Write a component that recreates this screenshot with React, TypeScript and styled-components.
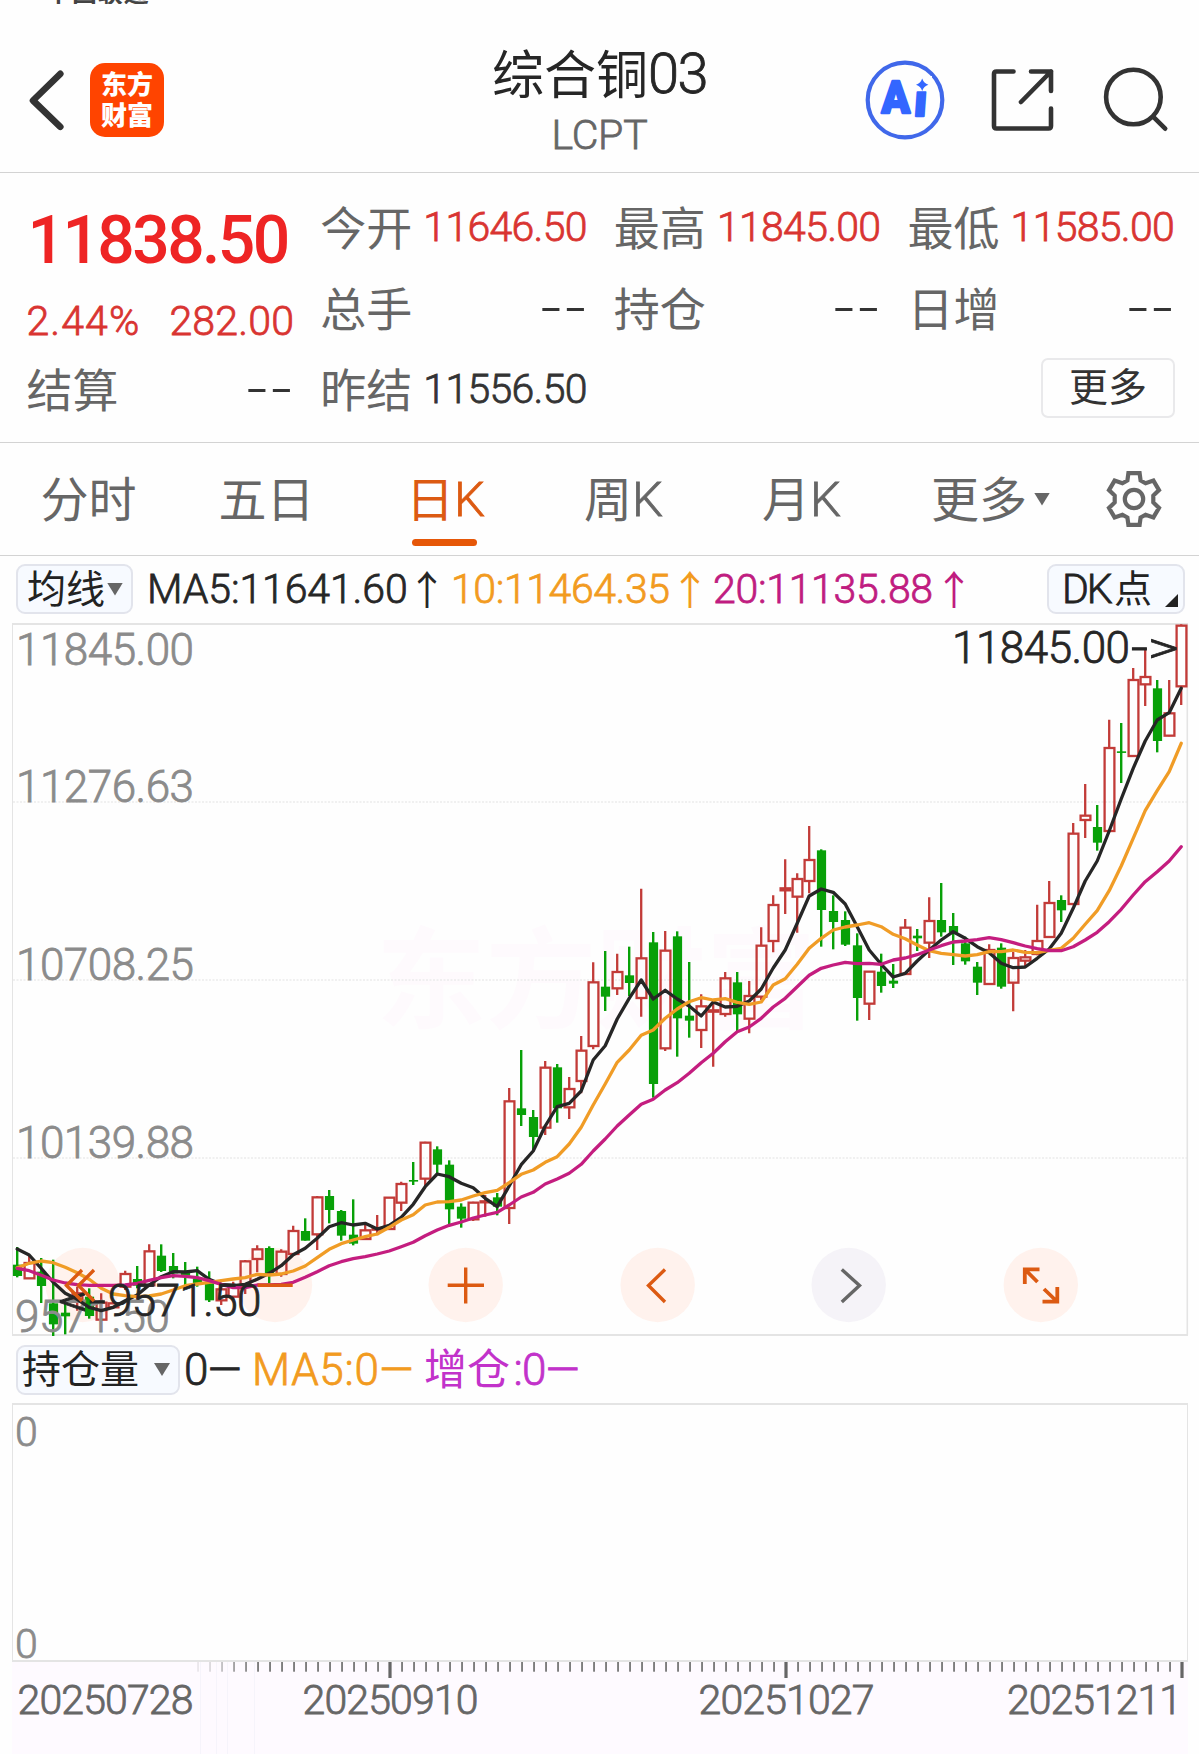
import React from "react";
import styled, { createGlobalStyle } from "styled-components";

const LATIN = `Roboto, "Noto Sans CJK SC", sans-serif`;
const HAN = `"Noto Sans CJK SC", Roboto, sans-serif`;

const GlobalStyle = createGlobalStyle`
  * { box-sizing: border-box; }
  html, body { margin: 0; background: #fefefe; }
  svg { display: block; }
`;

const Page = styled.div`
  width: 1199px;
  height: 1754px;
  overflow: hidden;
  background: #fefefe;
  display: flex;
  flex-direction: column;
  font-family: ${LATIN};
`;

const Han = styled.span<{ $size: number; $color?: string; $shift?: number }>`
  font-family: ${HAN};
  font-size: ${(p) => p.$size}px;
  line-height: 1;
  color: ${(p) => p.$color ?? "#666"};
  white-space: nowrap;
  transform: translateY(${(p) => p.$shift ?? -3}px);
`;

const Num = styled.span<{ $size?: number; $color?: string; $gap?: number; $weight?: number }>`
  font-size: ${(p) => p.$size ?? 41}px;
  line-height: 1;
  color: ${(p) => p.$color ?? "#333"};
  letter-spacing: ${(p) => p.$gap ?? -0.7}px;
  font-weight: ${(p) => p.$weight ?? 300};
  -webkit-text-stroke: ${(p) => (p.$weight ? 0 : 0.8)}px currentColor;
  white-space: nowrap;
`;

/* ---------- status bar and header ---------- */

const StatusBar = styled.div`
  height: 4px;
  flex: none;
  overflow: hidden;
  display: flex;
  align-items: flex-end;
  padding-left: 46px;
`;

const Carrier = styled.span`
  font: 700 25px/25px ${HAN};
  color: #444;
  letter-spacing: 0.9px;
  height: 25px;
`;

const Header = styled.header`
  height: 169px;
  flex: none;
  border-bottom: 1px solid #d3d3d3;
  display: grid;
  grid-template-columns: 1fr auto 1fr;
  align-items: center;
  padding-top: 24px;
`;

const HeaderLeft = styled.div`
  display: flex;
  align-items: center;
  gap: 25px;
  padding-left: 28px;
`;

const BrandMark = styled.div`
  width: 74px;
  height: 74px;
  border-radius: 15px;
  background: #ff4400;
  color: #fff;
  font: 900 26px/31px ${HAN};
  display: flex;
  flex-direction: column;
  align-items: center;
  justify-content: center;
  padding-bottom: 5px;
`;

const TitleBlock = styled.div`
  display: flex;
  flex-direction: column;
  align-items: center;
  gap: 13px;
  padding-top: 2px;
`;

const TitleLine = styled.div`
  display: flex;
  align-items: center;
  height: 56px;
`;

const HeaderRight = styled.div`
  display: flex;
  align-items: center;
  justify-content: flex-end;
  gap: 44px;
  padding-right: 30px;
  & > :first-child {
    margin-right: 1px;
  }
  & > :last-child {
    margin-left: 5px;
  }
`;

/* ---------- quote summary ---------- */

const Quote = styled.section`
  height: 270px;
  flex: none;
  border-bottom: 1px solid #d3d3d3;
  padding: 14px 24px 0 26.5px;
  display: grid;
  grid-template-columns: repeat(4, 1fr);
  grid-template-rows: repeat(3, 81px);
  column-gap: 26px;
`;

const PriceCell = styled.div`
  grid-row: span 2;
  display: flex;
  flex-direction: column;
  justify-content: space-between;
  padding: 21px 0 7px;
`;

const PriceLine = styled.div`
  display: flex;
  padding-left: 1px;
`;

const ChangeLine = styled.div`
  display: flex;
  justify-content: space-between;
`;

const Cell = styled.div`
  display: flex;
  align-items: center;
  justify-content: space-between;
  padding-right: 1px;
`;

const Blank = styled.span`
  font-size: 41px;
  line-height: 1;
  color: #333;
  letter-spacing: 2.7px;
  margin-right: -3px;
  transform: scaleX(1.75);
  transform-origin: 100% 50%;
`;

const MoreCell = styled.div`
  grid-column: 4;
  display: flex;
  align-items: center;
  justify-content: flex-end;
  padding-bottom: 3px;
`;

const MoreButton = styled.button`
  width: 134px;
  height: 60px;
  padding: 0;
  border: 2px solid #e9e9eb;
  border-radius: 7px;
  background: #fefefe;
  display: flex;
  align-items: center;
  justify-content: center;
`;

/* ---------- period tabs ---------- */

const Tabs = styled.nav`
  height: 113px;
  flex: none;
  border-bottom: 1px solid #d3d3d3;
  display: flex;
  align-items: stretch;
`;

const Tab = styled.div<{ $active?: boolean }>`
  width: 178px;
  position: relative;
  display: flex;
  align-items: center;
  justify-content: center;
  padding-right: 1px;
  &::after {
    content: "";
    display: ${(p) => (p.$active ? "block" : "none")};
    position: absolute;
    left: 56px;
    width: 65px;
    bottom: 9px;
    height: 7px;
    border-radius: 4px;
    background: #e65708;
  }
`;

const MoreTab = styled.div`
  display: flex;
  align-items: center;
  gap: 7px;
  padding-left: 41px;
`;

const Caret = styled.i`
  width: 16px;
  height: 13px;
  background: #666;
  clip-path: polygon(0 0, 100% 0, 50% 100%);
`;

const GearSlot = styled.div`
  display: flex;
  align-items: center;
  margin-left: auto;
  padding-right: 37px;
`;

/* ---------- indicator rows ---------- */

const IndicatorRow = styled.div<{ $height: number }>`
  height: ${(p) => p.$height}px;
  flex: none;
  display: flex;
  align-items: center;
  padding: 0 14px 0 16px;
`;

const Chip = styled.div<{ $width: number; $pad: string }>`
  width: ${(p) => p.$width}px;
  height: 50px;
  padding: ${(p) => p.$pad};
  flex: none;
  background: #f7faff;
  border: 2px solid #e2e4ec;
  border-radius: 9px;
  display: flex;
  align-items: center;
  justify-content: space-between;
`;

const Corner = styled.i`
  align-self: flex-end;
  width: 13px;
  height: 13px;
  margin-bottom: 5px;
  background: #222;
  clip-path: polygon(100% 0, 100% 100%, 0 100%);
`;

const Reading = styled.div<{ $width: number; $left?: number }>`
  width: ${(p) => p.$width}px;
  margin-left: ${(p) => p.$left ?? 0}px;
  display: flex;
  align-items: center;
  justify-content: space-between;
`;

const Arrow = styled.span<{ $color: string }>`
  font: 400 40px/1 ${HAN};
  color: ${(p) => p.$color};
  width: 22px;
  display: flex;
  justify-content: center;
  transform: translateY(-1px);
`;

const Spacer = styled.div`
  flex: 1;
`;

/* ---------- lower panel ---------- */

const Panel = styled.div`
  height: 259px;
  flex: none;
  margin: 0 11px 0 12px;
  border: 2px solid #e4e4e4;
  border-width: 2px 1.5px 2px 1px;
  display: flex;
  flex-direction: column;
  justify-content: space-between;
  padding: 12px 0 0 2px;
  & > span {
    line-height: 31px;
  }
`;

/* ---------- chart data: third-pixel offsets from a block's top ---------- */

type Candle = [dir: "u" | "d", high: number, top: number, bottom: number, low: number];

const block = (base: number, rows: Candle[]): Candle[] =>
  rows.map(([d, a, b, c, e]) => [d, base + a / 3, base + b / 3, base + c / 3, base + e / 3]);
const levels = (base: number, values: number[]) => values.map((v) => base + v / 3);

const candles: Candle[] = [
  ...block(1120, [
    ["d", 381, 434, 468, 472], ["u", 405, 429, 475, 476], ["d", 414, 455, 498, 549],
    ["d", 419, 550, 613, 648], ["d", 548, 578, 589, 643], ["u", 500, 520, 545, 572],
    ["d", 505, 530, 588, 596], ["u", 520, 548, 599, 603], ["u", 540, 550, 562, 566],
    ["u", 452, 462, 500, 510], ["d", 438, 477, 497, 505], ["u", 373, 394, 496, 500],
    ["d", 373, 407, 453, 456], ["d", 399, 438, 460, 475], ["d", 426, 455, 467, 503],
    ["d", 440, 475, 490, 500], ["d", 454, 490, 541, 546], ["u", 495, 508, 541, 555],
    ["u", 485, 498, 530, 540], ["u", 420, 424, 493, 522], ["u", 376, 388, 417, 457],
    ["d", 379, 384, 467, 490], ["u", 388, 395, 462, 470], ["u", 317, 333, 402, 408],
    ["d", 295, 333, 362, 362], ["u", 228, 232, 343, 390], ["d", 210, 228, 270, 310],
    ["d", 270, 273, 347, 362], ["d", 238, 344, 371, 376], ["u", 310, 331, 357, 357],
    ["u", 285, 325, 329, 346], ["u", 232, 233, 327, 327],
  ]),
  ...block(1040, [
    ["u", 425, 432, 488, 513], ["d", 366, 420, 424, 435], ["u", 305, 308, 416, 440],
    ["d", 319, 328, 374, 400], ["d", 361, 374, 508, 552], ["d", 490, 500, 536, 563],
    ["u", 485, 488, 538, 543], ["u", 465, 484, 487, 530], ["d", 459, 472, 500, 526],
    ["u", 144, 184, 504, 552], ["d", 30, 205, 225, 258], ["d", 210, 231, 291, 333],
    ["u", 63, 83, 263, 285], ["d", 72, 82, 205, 248], ["u", 111, 147, 202, 237],
  ]),
  ...block(800, [
    ["u", 708, 752, 843, 880], ["u", 487, 547, 738, 748], ["d", 453, 560, 590, 633],
    ["u", 461, 516, 565, 585], ["d", 440, 526, 549, 588], ["u", 266, 475, 594, 650],
    ["d", 396, 427, 852, 893], ["u", 393, 452, 745, 753], ["d", 394, 409, 655, 770],
    ["d", 486, 647, 662, 713], ["u", 583, 619, 690, 744], ["u", 600, 631, 635, 800],
    ["u", 516, 535, 642, 650], ["d", 516, 547, 643, 695], ["u", 543, 588, 656, 700],
    ["u", 382, 437, 590, 600], ["u", 286, 315, 423, 457], ["u", 178, 265, 271, 342],
    ["u", 220, 237, 290, 398], ["u", 78, 180, 243, 280], ["d", 148, 151, 330, 440],
    ["d", 286, 333, 366, 448], ["d", 334, 360, 434, 438], ["d", 400, 436, 594, 662],
    ["u", 513, 515, 611, 660], ["d", 461, 515, 558, 578], ["d", 492, 542, 551, 564],
  ]),
  ...block(600, [
    ["u", 957, 983, 1122, 1125], ["d", 987, 1007, 1015, 1053], ["u", 892, 963, 1028, 1074],
    ["d", 849, 960, 997, 1010], ["d", 939, 978, 998, 1095], ["d", 1010, 1030, 1084, 1094],
    ["d", 1086, 1100, 1148, 1185], ["u", 1033, 1050, 1152, 1155], ["d", 1030, 1043, 1160, 1166],
    ["u", 1055, 1074, 1148, 1234], ["u", 1050, 1072, 1082, 1100], ["u", 914, 1023, 1062, 1066],
    ["u", 843, 909, 1011, 1013], ["d", 886, 900, 931, 966], ["u", 669, 701, 912, 916],
    ["u", 552, 647, 660, 714], ["d", 615, 681, 728, 752], ["u", 359, 444, 693, 697],
    ["d", 369, 454, 458, 549], ["u", 204, 240, 468, 470], ["u", 145, 231, 253, 318],
    ["d", 240, 265, 423, 457], ["u", 240, 340, 407, 409], ["u", 73, 77, 259, 315],
  ]),
];

const ma5 = [
  ...levels(1120, [387, 405, 445, 487, 520, 538, 562, 572, 562, 542, 525, 495, 470, 455, 456, 452, 478, 493, 497, 493, 478, 460, 437, 404, 385, 355, 320, 308, 315, 310, 327]),
  ...levels(1040, [556, 532, 493, 440, 402, 410, 430, 443, 475, 500, 438, 374, 333, 258, 200, 190]),
  ...levels(800, [873, 780, 737, 657, 595, 540, 597, 571, 597, 618, 648, 606, 621, 619, 603, 567, 504, 450, 370, 288, 267, 277, 312, 380]),
  ...levels(600, [1050, 1093, 1131, 1120, 1083, 1050, 1020, 995, 1015, 1040, 1058, 1090, 1103, 1101, 1075, 1047, 1000, 925, 843, 783, 693, 597, 505, 423, 360, 338, 265]),
];

const ma10 = [
  ...levels(1120, [443, 430, 423, 428, 442, 458, 478, 505, 522, 527, 530, 528, 522, 510, 497, 492, 487, 482, 477, 473, 463, 465, 462, 453, 438, 413, 388, 371, 360, 350, 342]),
  ...levels(1040, [562, 540, 524, 495, 486, 485, 480, 468, 458, 451, 428, 403, 390, 367, 350, 312, 262, 195]),
  ...levels(800, [852, 787, 750, 706, 690, 655, 627, 605, 593, 600, 596, 607, 613, 606, 555, 536, 493, 445, 415, 390, 381, 375]),
  ...levels(600, [968, 980, 1003, 1016, 1035, 1052, 1060, 1064, 1068, 1064, 1055, 1055, 1050, 1057, 1058, 1051, 1045, 1015, 973, 932, 872, 798, 715, 632, 572, 515, 430]),
];

const ma20 = [
  ...levels(1120, [445, 452, 466, 480, 489, 494, 496, 496, 496, 495, 490, 481, 473, 467, 469, 473, 482, 493, 503, 503, 495, 495, 493, 487, 472, 455, 437, 425, 416, 410, 402]),
  ...levels(1040, [633, 620, 607, 587, 570, 556, 546, 534, 525, 517, 495, 471, 457, 432, 417, 400, 373, 333, 297, 258, 225]),
  ...levels(800, [913, 898, 870, 848, 820, 788, 760, 725, 695, 681, 655, 621, 595, 560, 526, 505, 495, 487, 491]),
  ...levels(600, [1090, 1093, 1080, 1074, 1064, 1050, 1037, 1026, 1023, 1019, 1013, 1019, 1028, 1038, 1046, 1052, 1052, 1040, 1020, 997, 965, 928, 885, 845, 815, 783, 740]),
];

const xAt = (i: number) => 17.2 + i * 12;
const toPoints = (ys: number[]) => ys.map((y, i) => `${xAt(i)},${y.toFixed(1)}`).join(" ");

const ChartText = styled.text`
  font-family: ${LATIN};
  font-size: 44px;
  font-weight: 300;
  stroke-width: 0.8px;
`;
const DateText = styled.text`
  font-family: ${LATIN};
  font-size: 41px;
  font-weight: 300;
  fill: #666;
  stroke: #666;
  stroke-width: 0.8px;
`;
const Watermark = styled.text`
  font: 700 110px ${HAN};
  fill: #fefafd;
`;

const scaleLabels: [string, number, number][] = [
  ["11845.00", 664.5, 178],
  ["11276.63", 802, 178],
  ["10708.25", 980, 178],
  ["10139.88", 1158, 178],
];

const CandleMark = ({ c, i }: { c: Candle; i: number }) => {
  const [dir, high, top, bottom, low] = c;
  const x = xAt(i);
  if (dir === "d") {
    return (
      <g fill="#08a008">
        <rect x={x - 1.2} y={high} width={2.4} height={low - high} />
        <rect x={x - 4.3} y={top} width={9.2} height={Math.max(bottom - top, 1.6)} />
      </g>
    );
  }
  return (
    <g fill="none" stroke="#c23b38" strokeWidth={2.3}>
      <path d={`M${x} ${high}V${top}M${x} ${bottom}V${low}`} />
      <rect x={x - 4.6} y={top} width={9.8} height={bottom - top} />
    </g>
  );
};

const KChart = () => (
  <svg width="1199" height="714" viewBox="0 622 1199 714">
    <Watermark x="376" y="1020">东方财富</Watermark>
    <g stroke="#ebebeb" strokeWidth="1.3" strokeDasharray="2 1.5">
      <path d="M13 802H1187M13 980H1187M13 1158H1187" />
    </g>
    <g fill="none" stroke="#e4e4e4">
      <path d="M12 624H1188M12 1335H1188" strokeWidth="2" />
      <path d="M12.5 624V1335" />
      <path d="M1187.3 624V1335" strokeWidth="1.6" />
    </g>
    {[82.7, 275, 465.7, 657.7, 848.7, 1040.8].map((cx, i) => (
      <circle key={cx} cx={cx} cy="1285" r="37.2" fill={i === 4 ? "#f5f3f8" : "#fff2ed"} />
    ))}
    {candles.map((c, i) => (
      <CandleMark key={i} c={c} i={i} />
    ))}
    <g fill="#8b8b8b" stroke="#8b8b8b">
      {scaleLabels.map(([t, y, w]) => (
        <ChartText key={t} x="16" y={y} textLength={w}>{t}</ChartText>
      ))}
      <ChartText x="15" y="1331.7" textLength="155">9571.50</ChartText>
    </g>
    <g fill="none" strokeWidth="3.3" strokeLinejoin="round" strokeLinecap="round">
      <polyline points={toPoints(ma5)} stroke="#262626" />
      <polyline points={toPoints(ma10)} stroke="#f09c26" />
      <polyline points={toPoints(ma20)} stroke="#c41d7f" />
    </g>
    <g fill="#262626" stroke="#262626">
      <ChartText x="952" y="662.5" textLength="178">11845.00</ChartText>
      <ChartText x="1131" y="662.5" textLength="48" lengthAdjust="spacingAndGlyphs">-&gt;</ChartText>
      <ChartText x="58" y="1315.7" textLength="48" lengthAdjust="spacingAndGlyphs">&lt;-</ChartText>
      <ChartText x="108" y="1315.7" textLength="153.5">9571.50</ChartText>
    </g>
    <g fill="none" stroke="#dc5a12" strokeWidth="3.4">
      <path d="M82 1270L66.5 1285.5L82 1301M94 1270L78.5 1285.5L94 1301" />
      <path d="M257.7 1285.3H292.7" />
      <path d="M447.7 1285.3H484M465.7 1267.5V1303.5" />
      <path d="M665 1269.5L648.5 1285.5L665 1302" />
      <path d="M841.8 1269.5L859.5 1285.5L841.8 1302" stroke="#666" />
      <g strokeWidth="3.8">
        <path d="M1024.8 1284V1269.3H1039.5M1025 1269.5L1037.5 1282" />
        <path d="M1042.5 1301.7H1057.3V1287M1057 1301.5L1044 1289" />
      </g>
    </g>
  </svg>
);

const tickOpacity = (i: number) => [0.15, 0.25, 0.45, 0.7, 0.85][i - 15] ?? 1;

const TimeAxis = () => (
  <svg width="1199" height="92" viewBox="0 1662 1199 92">
    <rect x="12" y="1662" width="1176" height="92" fill="#fefaff" />
    <path d="M200.5 1662V1754M216.5 1662V1754M227.5 1662V1754M254.5 1662V1754" stroke="#f6f4fb" />
    {Array.from({ length: 83 }, (_, k) => k + 15).map((i) => {
      const major = i === 31 || i === 64 || i === 97;
      return (
        <rect
          key={i}
          x={xAt(i) + 0.8 - (major ? 1.6 : 0.9)}
          y="1662"
          width={major ? 3.2 : 1.9}
          height={major ? 16 : 9.7}
          fill={major ? "#666" : "#7d7d7d"}
          opacity={tickOpacity(i)}
        />
      );
    })}
    <DateText x="17.5" y="1714" textLength="176">20250728</DateText>
    <DateText x="302.5" y="1714" textLength="176">20250910</DateText>
    <DateText x="698.5" y="1714" textLength="176">20251027</DateText>
    <DateText x="1007" y="1714" textLength="175">20251211</DateText>
  </svg>
);

/* ---------- icons ---------- */

const BackIcon = () => (
  <svg width="37" height="62" viewBox="0 0 37 62" fill="none" stroke="#333" strokeWidth="6.6" strokeLinejoin="round" strokeLinecap="round">
    <path d="M32.3 4.8L5 31.5L32.3 57.8" />
  </svg>
);

const AiText = styled.text`
  font: 900 45px Roboto, sans-serif;
  fill: #3366ff;
  stroke: #3366ff;
  stroke-width: 2.4px;
  stroke-linejoin: round;
`;

const AiIcon = () => (
  <svg width="80" height="80" viewBox="865 60 80 80">
    <circle cx="905" cy="100" r="37.3" fill="#fefefe" stroke="#4068ea" strokeWidth="4.2" />
    <AiText x="881.5" y="113" textLength="28.5" lengthAdjust="spacingAndGlyphs">A</AiText>
    <AiText transform="translate(913.5 115.5) skewX(-4)">i</AiText>
    <path d="M911 76H932V91.2H911Z" fill="#fefefe" />
    <path d="M922.2 78.5Q923.8 83.3 928.4 84.8Q923.8 86.3 922.2 91Q920.6 86.3 916 84.8Q920.6 83.3 922.2 78.5Z" fill="#3366ff" />
  </svg>
);

const ShareIcon = () => (
  <svg width="64" height="64" viewBox="990 68 64 64" fill="none" stroke="#333" strokeWidth="4.6" strokeLinecap="round" strokeLinejoin="round">
    <path d="M1013.5 71.5H996.5Q994 71.5 994 74V126Q994 128.5 996.5 128.5H1048.5Q1051 128.5 1051 126V108.5" />
    <path d="M1031 71.5H1051V91M1051 71.5L1021 102" />
  </svg>
);

const SearchIcon = () => (
  <svg width="66" height="66" viewBox="1103 66 66 66" fill="none" stroke="#333" strokeWidth="4.6" strokeLinecap="round">
    <circle cx="1133.4" cy="96" r="27.3" />
    <path d="M1153.6 116.2L1165.2 127.7" />
  </svg>
);

const GearIcon = () => (
  <svg width="56" height="56" viewBox="0 0 56 56" fill="none" stroke="#666" strokeWidth="4.2" strokeLinejoin="miter">
    <path d="M22.4 2.1H33.6L34.6 9.5L39.6 12.3L47.4 9.6L53 19.1L47.3 24.6V31.4L53 36.9L47.4 46.4L39.6 43.7L34.6 46.5L33.6 53.9H22.4L21.4 46.5L16.4 43.7L8.6 46.4L3 36.9L8.7 31.4V24.6L3 19.1L8.6 9.6L16.4 12.3L21.4 9.5Z" />
    <circle cx="28" cy="28" r="9.2" />
  </svg>
);

const RED = "#d93431";
const ORANGE = "#f29b1f";
const MAGENTA = "#c01c80";

const Field = ({ label, value, color }: { label: string; value?: string; color?: string }) => (
  <Cell>
    <Han $size={46}>{label}</Han>
    {value ? <Num $color={color}>{value}</Num> : <Blank>--</Blank>}
  </Cell>
);

const tabs: [string, string][] = [["分时", ""], ["五日", ""], ["日", "K"], ["周", "K"], ["月", "K"]];

export default function App() {
  return (
    <Page>
      <GlobalStyle />
      <StatusBar>
        <Carrier>中国联通</Carrier>
      </StatusBar>
      <Header>
        <HeaderLeft>
          <BackIcon />
          <BrandMark>
            <span>东方</span>
            <span>财富</span>
          </BrandMark>
        </HeaderLeft>
        <TitleBlock>
          <TitleLine>
            <Han $size={52} $color="#262626" $shift={-2}>综合铜</Han>
            <Num $size={56} $gap={-1.5} $color="#262626">03</Num>
          </TitleLine>
          <Num $color="#666" $gap={-0.2}>LCPT</Num>
        </TitleBlock>
        <HeaderRight>
          <AiIcon />
          <ShareIcon />
          <SearchIcon />
        </HeaderRight>
      </Header>

      <Quote>
        <PriceCell>
          <PriceLine>
            <Num $size={66} $weight={500} $gap={-2.6} $color="#ee2424">11838.50</Num>
          </PriceLine>
          <ChangeLine>
            <Num $color={RED} $gap={1.1}>2.44%</Num>
            <Num $color={RED} $gap={0.2}>282.00</Num>
          </ChangeLine>
        </PriceCell>
        <Field label="今开" value="11646.50" color={RED} />
        <Field label="最高" value="11845.00" color={RED} />
        <Field label="最低" value="11585.00" color={RED} />
        <Field label="总手" />
        <Field label="持仓" />
        <Field label="日增" />
        <Field label="结算" />
        <Field label="昨结" value="11556.50" />
        <MoreCell>
          <MoreButton>
            <Han $size={39} $color="#333" $shift={-4}>更多</Han>
          </MoreButton>
        </MoreCell>
      </Quote>

      <Tabs>
        {tabs.map(([han, k]) => {
          const active = han === "日";
          const color = active ? "#dc5a12" : "#666";
          return (
            <Tab key={han} $active={active}>
              <Han $size={48} $color={color}>{han}</Han>
              {k && <Num $size={49} $gap={-2} $color={color}>{k}</Num>}
            </Tab>
          );
        })}
        <MoreTab>
          <Han $size={48}>更多</Han>
          <Caret />
        </MoreTab>
        <GearSlot>
          <GearIcon />
        </GearSlot>
      </Tabs>

      <IndicatorRow $height={66}>
        <Chip $width={117} $pad="0 8px 0 9px">
          <Han $size={39} $color="#222">均线</Han>
          <Caret />
        </Chip>
        <Reading $width={291} $left={14}>
          <Num $color="#262626" $gap={-0.1}>MA5:11641.60</Num>
          <Arrow $color="#262626">↑</Arrow>
        </Reading>
        <Reading $width={250} $left={13}>
          <Num $color={ORANGE} $gap={-0.4}>10:11464.35</Num>
          <Arrow $color={ORANGE}>↑</Arrow>
        </Reading>
        <Reading $width={252} $left={12}>
          <Num $color={MAGENTA} $gap={-0.3}>20:11135.88</Num>
          <Arrow $color={MAGENTA}>↑</Arrow>
        </Reading>
        <Spacer />
        <Chip $width={138} $pad="0 5px 0 13px">
          <Reading $width={90}>
            <Num $color="#222" $gap={-2}>DK</Num>
            <Han $size={38} $color="#222">点</Han>
          </Reading>
          <Corner />
        </Chip>
      </IndicatorRow>

      <KChart />

      <IndicatorRow $height={67}>
        <Chip $width={164} $pad="0 8px 0 4px">
          <Han $size={39} $color="#222">持仓量</Han>
          <Caret />
        </Chip>
        <Reading $width={60} $left={4}>
          <Num $size={44} $color="#262626">0—</Num>
        </Reading>
        <Reading $width={164} $left={8}>
          <Num $size={44} $color={ORANGE} $gap={0.7}>MA5:0—</Num>
        </Reading>
        <Reading $width={155} $left={8}>
          <Han $size={43} $color="#c232ca">增仓</Han>
          <Num $size={44} $color="#c232ca">:0—</Num>
        </Reading>
      </IndicatorRow>

      <Panel>
        <Num $color="#8b8b8b">0</Num>
        <Num $color="#8b8b8b">0</Num>
      </Panel>
      <TimeAxis />
    </Page>
  );
}
